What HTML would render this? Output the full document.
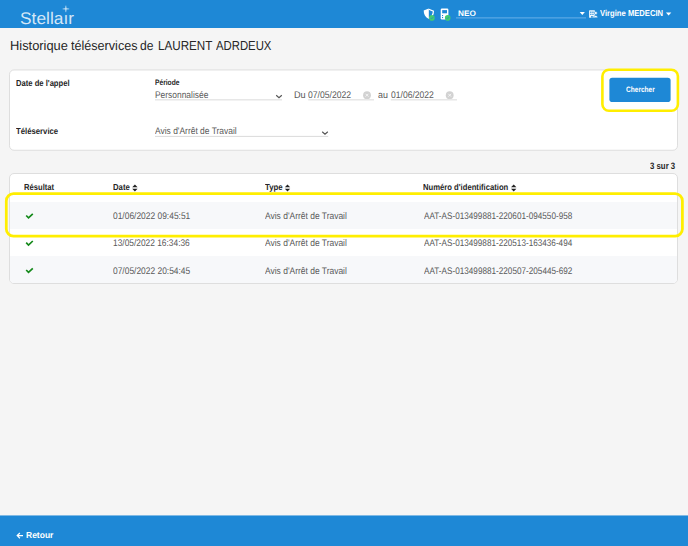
<!DOCTYPE html>
<html><head><meta charset="utf-8">
<style>
*{box-sizing:border-box;margin:0;padding:0}
html,body{width:688px;height:546px;overflow:hidden;background:#f5f5f5;font-family:"Liberation Sans",sans-serif}
.t{text-rendering:geometricPrecision;position:absolute;white-space:nowrap;line-height:1;transform-origin:0 0}
.a{position:absolute}
#top{left:0;top:0;width:688px;height:28px;background:#1e88d6}
#foot{left:0;top:515px;width:688px;height:31px;background:#1e88d6;border-top:1px solid #7fb9e4}
.panel{background:#fff;border:1px solid #dedede;border-radius:5px}
.ul{height:1px;background:#cfcfcf}
.row{left:10px;width:667px;background:#f7f8fa}
svg{position:absolute;left:0;top:0;overflow:visible}
</style></head><body>
<div class="a" id="top"></div>
<div class="a" id="foot"></div>
<svg width="688" height="546" viewBox="0 0 688 546"><rect x="9.5" y="69.95" width="668" height="80.3" rx="4.5" fill="#fff" stroke="#dedede"/></svg>
<div class="a panel" style="left:9px;top:173px;width:669px;height:111px"></div>
<div class="a row" style="top:202px;height:27px"></div>
<div class="a row" style="top:256px;height:27px;border-radius:0 0 4px 4px"></div>



<svg width="688" height="546" viewBox="0 0 688 546"><rect x="609.4" y="77.8" width="61.2" height="24.3" rx="2.8" fill="#1e88d6"/></svg>
<div class="t" style="left:20.18px;top:11px;font-size:16.9px;font-weight:normal;color:rgba(255,255,255,.82);transform:scaleX(1.0277)">Stellaır</div>
<div class="t" style="left:458.29px;top:10px;font-size:8.0px;font-weight:bold;color:#fff;transform:scaleX(1.0295)">NEO</div>
<div class="t" style="left:600.30px;top:9px;font-size:8.6px;font-weight:bold;color:#fff;transform:scaleX(0.8890)">Virgine MEDECIN</div>
<div class="t" style="left:9.52px;top:39px;font-size:13.1px;font-weight:normal;color:#262626;transform:scaleX(0.9828)">Historique</div>
<div class="t" style="left:71.15px;top:39px;font-size:13.1px;font-weight:normal;color:#262626;transform:scaleX(0.9619)">téléservices</div>
<div class="t" style="left:140.29px;top:39px;font-size:13.1px;font-weight:normal;color:#262626;transform:scaleX(0.9238)">de</div>
<div class="t" style="left:157.61px;top:39px;font-size:13.1px;font-weight:normal;color:#262626;transform:scaleX(0.8884)">LAURENT</div>
<div class="t" style="left:215.75px;top:39px;font-size:13.1px;font-weight:normal;color:#262626;transform:scaleX(0.8658)">ADRDEUX</div>
<div class="t" style="left:15.56px;top:79px;font-size:8.7px;font-weight:bold;color:#262626;transform:scaleX(0.8786)">Date de l'appel</div>
<div class="t" style="left:16.00px;top:127px;font-size:8.7px;font-weight:bold;color:#262626;transform:scaleX(0.8905)">Téléservice</div>
<div class="t" style="left:154.78px;top:79px;font-size:8.0px;font-weight:bold;color:#262626;transform:scaleX(0.8323)">Période</div>
<div class="t" style="left:154.64px;top:91px;font-size:9.6px;font-weight:normal;color:#5a5a5a;transform:scaleX(0.8779)">Personnalisée</div>
<div class="t" style="left:293.83px;top:91px;font-size:9.6px;font-weight:normal;color:#5a5a5a;transform:scaleX(0.9517)">Du</div>
<div class="t" style="left:308.23px;top:91px;font-size:9.6px;font-weight:normal;color:#5a5a5a;transform:scaleX(0.8984)">07/05/2022</div>
<div class="t" style="left:377.63px;top:91px;font-size:9.6px;font-weight:normal;color:#5a5a5a;transform:scaleX(0.9241)">au</div>
<div class="t" style="left:390.73px;top:91px;font-size:9.6px;font-weight:normal;color:#5a5a5a;transform:scaleX(0.8931)">01/06/2022</div>
<div class="t" style="left:155.10px;top:127px;font-size:9.6px;font-weight:normal;color:#5a5a5a;transform:scaleX(0.8806)">Avis d'Arrêt de Travail</div>
<div class="t" style="left:625.85px;top:86px;font-size:7.85px;font-weight:bold;color:#fff;transform:scaleX(0.8355)">Chercher</div>
<div class="t" style="left:650.03px;top:162px;font-size:9.3px;font-weight:bold;color:#262626;transform:scaleX(0.8403)">3 sur 3</div>
<div class="t" style="left:23.96px;top:183px;font-size:8.7px;font-weight:bold;color:#262626;transform:scaleX(0.8776)">Résultat</div>
<div class="t" style="left:112.55px;top:183px;font-size:8.7px;font-weight:bold;color:#262626;transform:scaleX(0.8941)">Date</div>
<div class="t" style="left:264.50px;top:183px;font-size:8.7px;font-weight:bold;color:#262626;transform:scaleX(0.9011)">Type</div>
<div class="t" style="left:423.06px;top:183px;font-size:8.7px;font-weight:bold;color:#262626;transform:scaleX(0.8821)">Numéro d'identification</div>
<div class="t" style="left:25.72px;top:531px;font-size:8.8px;font-weight:bold;color:#fff;transform:scaleX(0.9664)">Retour</div>
<div class="t" style="left:112.74px;top:212px;font-size:9.6px;font-weight:normal;color:#5a5a5a;transform:scaleX(0.8781)">01/06/2022 09:45:51</div>
<div class="t" style="left:264.50px;top:212px;font-size:9.6px;font-weight:normal;color:#5a5a5a;transform:scaleX(0.8817)">Avis d'Arrêt de Travail</div>
<div class="t" style="left:423.50px;top:212px;font-size:9.6px;font-weight:normal;color:#5a5a5a;transform:scaleX(0.8511)">AAT-AS-013499881-220601-094550-958</div>
<div class="t" style="left:113.19px;top:239px;font-size:9.6px;font-weight:normal;color:#5a5a5a;transform:scaleX(0.8720)">13/05/2022 16:34:36</div>
<div class="t" style="left:264.50px;top:239px;font-size:9.6px;font-weight:normal;color:#5a5a5a;transform:scaleX(0.8817)">Avis d'Arrêt de Travail</div>
<div class="t" style="left:423.50px;top:239px;font-size:9.6px;font-weight:normal;color:#5a5a5a;transform:scaleX(0.8506)">AAT-AS-013499881-220513-163436-494</div>
<div class="t" style="left:112.74px;top:267px;font-size:9.6px;font-weight:normal;color:#5a5a5a;transform:scaleX(0.8771)">07/05/2022 20:54:45</div>
<div class="t" style="left:264.50px;top:267px;font-size:9.6px;font-weight:normal;color:#5a5a5a;transform:scaleX(0.8817)">Avis d'Arrêt de Travail</div>
<div class="t" style="left:423.50px;top:267px;font-size:9.6px;font-weight:normal;color:#5a5a5a;transform:scaleX(0.8516)">AAT-AS-013499881-220507-205445-692</div>

<svg width="688" height="546" viewBox="0 0 688 546">
<!-- underlines -->
<line x1="155" x2="282" y1="99.85" y2="99.85" stroke="#dadada"/>
<line x1="308.2" x2="374" y1="99.85" y2="99.85" stroke="#dadada"/>
<line x1="390.8" x2="457" y1="99.85" y2="99.85" stroke="#dadada"/>
<line x1="155" x2="328.2" y1="136.4" y2="136.4" stroke="#dadada"/>
<line x1="456" x2="586" y1="17.9" y2="17.9" stroke="#69b1e8"/>
<!-- logo star -->
<path d="M65.9,5.6 L66.35,8.45 L69.2,8.9 L66.35,9.35 L65.9,12.2 L65.45,9.35 L62.6,8.9 L65.45,8.45Z" fill="#e6f2fb" stroke="#e6f2fb" stroke-width="0.25"/>
<!-- shield -->
<path d="M428.8,8.6 L423.7,10.6 C423.6,14.4 425.4,17.4 428.8,18.9Z" fill="#fff"/>
<path d="M428.8,9.3 L433.4,11.1 C433.4,14.4 431.9,17 428.8,18.3" fill="none" stroke="#fff" stroke-width="1.2"/>
<circle cx="431.9" cy="17.9" r="2.8" fill="#41ca72"/><path d="M430.6,17.9 L431.6,18.9 L433.3,17.0" fill="none" stroke="#2a93b4" stroke-width="0.8"/>
<!-- card reader -->
<rect x="440.7" y="8.4" width="7.7" height="11.2" rx="1.3" fill="#fff"/>
<rect x="442.2" y="10.1" width="4.8" height="3.2" fill="#1e88d6"/>
<rect x="442" y="15" width="1.1" height="1.1" fill="#1e88d6"/><rect x="442" y="17" width="1.1" height="1.1" fill="#1e88d6"/>
<circle cx="447.7" cy="17.9" r="2.8" fill="#41ca72"/><path d="M446.4,17.9 L447.4,18.9 L449.1,17.0" fill="none" stroke="#2a93b4" stroke-width="0.8"/>
<!-- carets -->
<path d="M579.7,12 L584.9,12 L582.3,15Z" fill="#fff"/>
<path d="M665.9,12.5 L671.3,12.5 L668.6,15.5Z" fill="#fff"/>
<!-- user icon -->
<rect x="589.1" y="10.3" width="5.8" height="7.4" rx="0.5" fill="#f2f8fd"/>
<path d="M590.3,11.6h1.1v1.3h-1.1z M592.4,11.6h1.1v1.3h-1.1z M590.3,13.8h1.1v1.3h-1.1z M592.4,13.8h1.1v1.3h-1.1z M591.2,16h1.5v1.7h-1.5z" fill="#1e88d6"/>
<circle cx="595.8" cy="13" r="1.5" fill="#f2f8fd" stroke="#1e88d6" stroke-width="0.5"/><path d="M593.6,17.7 C593.6,14.7 597.6,14.7 597.6,17.7Z" fill="#f2f8fd" stroke="#1e88d6" stroke-width="0.5"/>
<!-- chevrons -->
<path d="M276.2,95.2 L279,97.7 L281.8,95.2" fill="none" stroke="#555" stroke-width="1.15"/>
<path d="M322.2,131.7 L325,134.2 L327.8,131.7" fill="none" stroke="#555" stroke-width="1.15"/>
<!-- clear icons -->
<circle cx="367" cy="95.2" r="3.9" fill="#d2d2d2"/><path d="M365.6,93.8 L368.4,96.6 M368.4,93.8 L365.6,96.6" stroke="#f6f6f6" stroke-width="1"/>
<circle cx="449.7" cy="95.2" r="3.9" fill="#d2d2d2"/><path d="M448.3,93.8 L451.1,96.6 M451.1,93.8 L448.3,96.6" stroke="#f6f6f6" stroke-width="1"/>
<!-- sort icons -->
<path d="M132.2,187.3 L134.9,184.5 L137.6,187.3Z M132.2,188.8 L134.9,191.6 L137.6,188.8Z" fill="#222"/>
<path d="M284.8,187.3 L287.5,184.5 L290.2,187.3Z M284.8,188.8 L287.5,191.6 L290.2,188.8Z" fill="#222"/>
<path d="M511.0,187.3 L513.7,184.5 L516.4,187.3Z M511.0,188.8 L513.7,191.6 L516.4,188.8Z" fill="#222"/>
<!-- checks -->
<path d="M26.2,215.5 L28.5,217.8 L32.8,213.8" fill="none" stroke="#14891a" stroke-width="1.7"/>
<path d="M26.2,242.7 L28.5,245.0 L32.8,241.0" fill="none" stroke="#14891a" stroke-width="1.7"/>
<path d="M26.2,270.0 L28.5,272.3 L32.8,268.3" fill="none" stroke="#14891a" stroke-width="1.7"/>
<!-- back arrow -->
<path d="M23,535.6 L17.3,535.6 M19.9,533 L17.2,535.6 L19.9,538.2" fill="none" stroke="#fff" stroke-width="1.2"/>
<!-- yellow highlights -->
<rect x="602.4" y="69.8" width="75.5" height="40.9" rx="6.5" fill="none" stroke="#ffee00" stroke-width="2.6"/>
<rect x="6.3" y="193.7" width="676.1" height="42.5" rx="7.2" fill="none" stroke="#ffee00" stroke-width="2.75"/>
</svg>
</body></html>
